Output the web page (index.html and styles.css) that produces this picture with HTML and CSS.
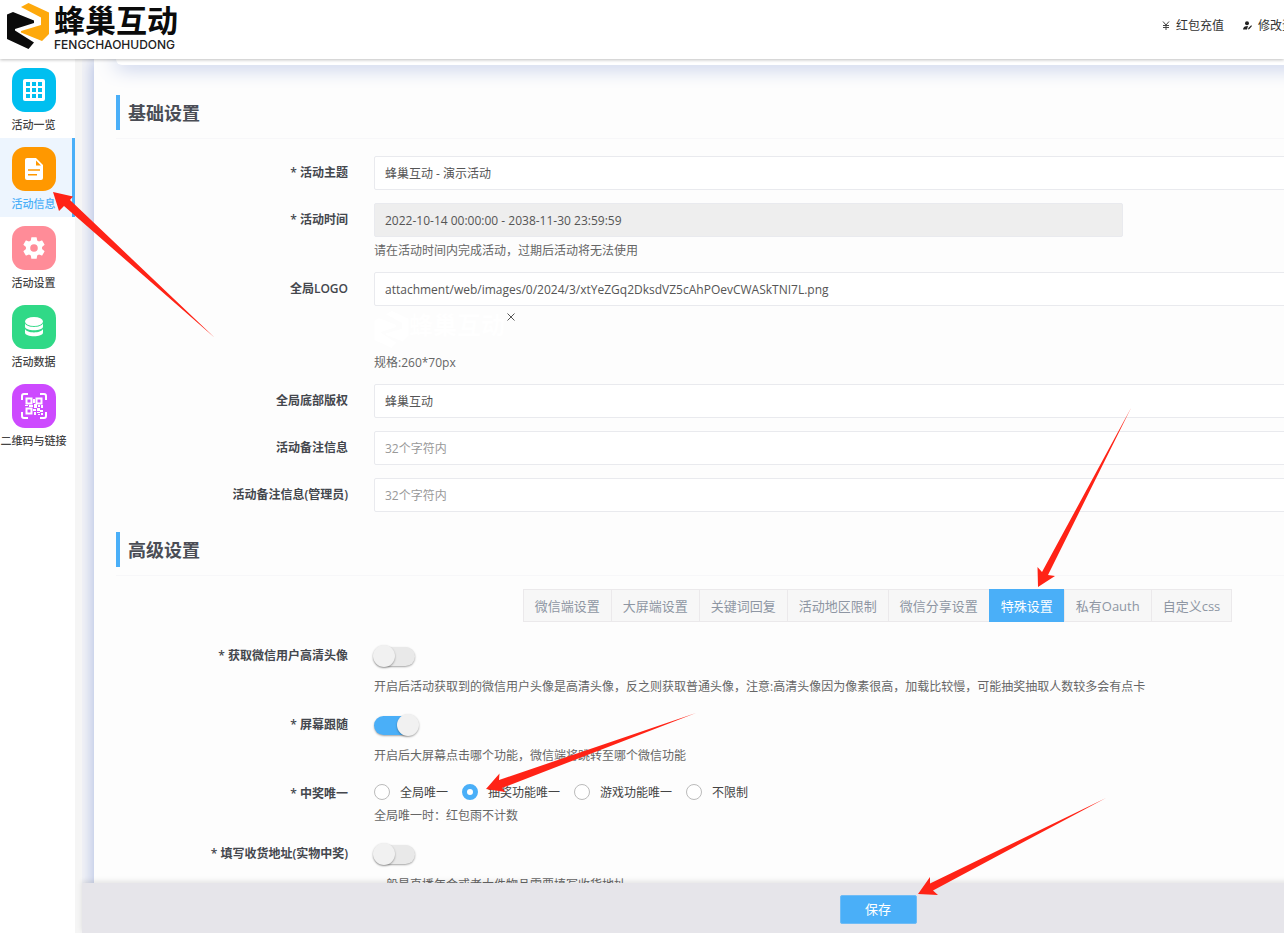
FILE: index.html
```
<!DOCTYPE html>
<html lang="zh-CN">
<head>
<meta charset="utf-8">
<title>蜂巢互动 - 活动信息</title>
<link rel="stylesheet" href="styles.css">
</head>
<body>
<header class="header">
  <a class="brand" href="#">
    <svg class="brand-mark" viewBox="0 0 42 46" aria-hidden="true">
      <path fill="#0b0b0b" d="M0 11.500L6 9L27 17.500V20L8 26V27.500L27 39.500L21.500 46L0 36z"/>
      <path fill="#fea90c" d="M14 4L21.500 0L42 9.500V31L35 38L14 29.500V28L34 22V14.500z"/>
    </svg>
    <span class="brand-text"><strong>蜂巢互动</strong><small>FENGCHAOHUDONG</small></span>
  </a>
  <nav class="top-nav">
    <a href="#">
      <svg width="8" height="9" viewBox="0 0 8 9" aria-hidden="true"><path d="M1 0.500L4 4L7 0.500M4 4V9M1 4.500H7M1 6.500H7" fill="none" stroke="#444" stroke-width="1"/></svg>
      红包充值</a>
    <a href="#">
      <svg width="9" height="9" viewBox="0 0 9 9" aria-hidden="true"><circle cx="4" cy="2.200" r="2" fill="#222"/><path d="M0 8.500C0 6 2 5 5 5L4 8.500zM5 8.500L5.400 7L8.200 4.200L9 5L6.400 7.900z" fill="#222"/></svg>
      修改资料</a>
  </nav>
</header>
<div class="body">
  <aside class="sidebar">
    <a class="side-item" href="#"><span class="tile cyan">
      <svg width="24" height="24" viewBox="0 0 24 24"><rect x="1" y="1" width="22" height="22" rx="2" fill="#fff"/><path d="M4 4h4v4H4zM10 4h4v4h-4zM16 4h4v4h-4zM4 10h4v4H4zM10 10h4v4h-4zM16 10h4v4h-4zM4 16h4v4H4zM10 16h4v4h-4zM16 16h4v4h-4z" fill="#00bff0"/></svg>
    </span>活动一览</a>
    <a class="side-item active" href="#"><span class="tile orange">
      <svg width="24" height="24" viewBox="0 0 24 24"><path d="M5 1h9l7 7v13a2 2 0 0 1-2 2H5a2 2 0 0 1-2-2V3a2 2 0 0 1 2-2z" fill="#fff"/><path d="M14 3.500V8.500h5zM6 12.200h12v1.600H6zM6 17h9v1.600H6z" fill="#ff9800"/></svg>
    </span>活动信息</a>
    <a class="side-item" href="#"><span class="tile pink">
      <svg width="26" height="26" viewBox="0 0 24 24"><path fill="#fff" d="M19.400 13a7.500 7.500 0 0 0 0-2l2.200-1.700a.5.5 0 0 0 .1-.6l-2-3.500a.5.5 0 0 0-.6-.2l-2.500 1a7.300 7.300 0 0 0-1.700-1l-.4-2.600a.5.5 0 0 0-.5-.4h-4a.5.5 0 0 0-.5.4L9.100 5a7.700 7.700 0 0 0-1.700 1l-2.500-1a.5.5 0 0 0-.6.200l-2 3.500a.5.5 0 0 0 .1.600L4.600 11a8 8 0 0 0 0 2l-2.200 1.700a.5.5 0 0 0-.1.600l2 3.500c.1.200.4.300.6.200l2.500-1a7.300 7.300 0 0 0 1.700 1l.4 2.600c0 .2.200.4.500.4h4c.2 0 .5-.2.500-.4l.4-2.600a7.700 7.700 0 0 0 1.700-1l2.500 1c.2.100.5 0 .6-.2l2-3.500a.5.5 0 0 0-.1-.6zM12 15.500a3.500 3.500 0 1 1 0-7 3.500 3.500 0 0 1 0 7z"/></svg>
    </span>活动设置</a>
    <a class="side-item" href="#"><span class="tile green">
      <svg width="20" height="22" viewBox="0 0 20 22"><ellipse cx="10" cy="5.500" rx="9" ry="4.500" fill="#fff"/><path fill="#fff" d="M1 7.500c2 4.500 16 4.500 18 0v3c0 5-18 5-18 0zM1 13c2 4.500 16 4.500 18 0v3.500c0 5-18 5-18 0z"/></svg>
    </span>活动数据</a>
    <a class="side-item" href="#"><span class="tile purple">
      <svg width="28" height="28" viewBox="0 0 28 28" fill="none" stroke="#fff" stroke-width="2"><path d="M2 8V4a2 2 0 0 1 2-2h4M20 2h4a2 2 0 0 1 2 2v4M26 20v4a2 2 0 0 1-2 2h-4M8 26H4a2 2 0 0 1-2-2v-4M6.500 6.500h5v5h-5zM16.500 6.500h5v5h-5zM6.500 16.500h5v5h-5z"/><path fill="#fff" stroke="none" d="M13 7h2v4h-2zM5 13h3v1H5zM9 13h4v2H9zM14 12h3v4h-3zM18 13h2v2h-2zM21 13h2v3h-2zM13 17h3v2h-3zM17 16h3v3h-3zM14 20h2v3h-2zM17 20h3v1h-3zM20 18h3v2h-3zM18 22h2v1h-2zM21 21h2v2h-2z"/></svg>
    </span>二维码与链接</a>
  </aside>
  <main class="main">
    <form class="stage">
      <div class="panel">
        <div class="prev-card"></div>
        <h2 class="section-title">基础设置</h2>
        <div class="row">
          <label class="row-label" for="topic">* 活动主题</label>
          <div class="field"><input class="text" id="topic" value="蜂巢互动 - 演示活动"></div>
        </div>
        <div class="row">
          <label class="row-label" for="time">* 活动时间</label>
          <div class="field"><input class="text locked" id="time" readonly value="2022-10-14 00:00:00 - 2038-11-30 23:59:59">
            <p class="help">请在活动时间内完成活动，过期后活动将无法使用</p></div>
        </div>
        <div class="row">
          <label class="row-label" for="logo">全局LOGO</label>
          <div class="field"><input class="text" id="logo" value="attachment/web/images/0/2024/3/xtYeZGq2DksdVZ5cAhPOevCWASkTNI7L.png">
            <div class="preview">
              <svg class="preview-mark" viewBox="0 0 42 46" aria-hidden="true">
                <path fill="#fff" d="M0 11.500L6 9L27 17.500V20L8 26V27.500L27 39.500L21.500 46L0 36zM14 4L21.500 0L42 9.500V31L35 38L14 29.500V28L34 22V14.500z"/>
              </svg>
              <span class="preview-name">蜂巢互动</span>
              <button class="remove" type="button" aria-label="删除"><svg width="8" height="8" viewBox="0 0 8 8"><path d="M0.500 0.500L7.500 7.500M7.500 0.500L0.500 7.500" stroke="#555" fill="none"/></svg></button>
            </div>
            <p class="help">规格:260*70px</p></div>
        </div>
        <div class="row">
          <label class="row-label" for="copy">全局底部版权</label>
          <div class="field"><input class="text" id="copy" value="蜂巢互动"></div>
        </div>
        <div class="row">
          <label class="row-label" for="note">活动备注信息</label>
          <div class="field"><input class="text" id="note" placeholder="32个字符内"></div>
        </div>
        <div class="row">
          <label class="row-label" for="admin-note">活动备注信息(管理员)</label>
          <div class="field"><input class="text" id="admin-note" placeholder="32个字符内"></div>
        </div>
        <h2 class="section-title advanced">高级设置</h2>
        <div class="tabs">
          <button type="button">微信端设置</button><button type="button">大屏端设置</button><button type="button">关键词回复</button><button type="button">活动地区限制</button><button type="button">微信分享设置</button><button type="button" class="on">特殊设置</button><button type="button">私有Oauth</button><button type="button">自定义css</button>
        </div>
        <div class="row">
          <label class="row-label" for="hd">* 获取微信用户高清头像</label>
          <div class="field"><div class="control"><input class="switch" type="checkbox" id="hd"></div>
            <p class="help">开启后活动获取到的微信用户头像是高清头像，反之则获取普通头像，注意:高清头像因为像素很高，加载比较慢，可能抽奖抽取人数较多会有点卡</p></div>
        </div>
        <div class="row">
          <label class="row-label" for="follow">* 屏幕跟随</label>
          <div class="field"><div class="control"><input class="switch" type="checkbox" id="follow" checked></div>
            <p class="help">开启后大屏幕点击哪个功能，微信端将跳转至哪个微信功能</p></div>
        </div>
        <div class="row">
          <span class="row-label">* 中奖唯一</span>
          <div class="field"><div class="radios">
              <label><input type="radio" name="only">全局唯一</label>
              <label><input type="radio" name="only" checked>抽奖功能唯一</label>
              <label><input type="radio" name="only">游戏功能唯一</label>
              <label><input type="radio" name="only">不限制</label>
            </div>
            <p class="help tight">全局唯一时：红包雨不计数</p></div>
        </div>
        <div class="row">
          <label class="row-label" for="addr">* 填写收货地址(实物中奖)</label>
          <div class="field"><div class="control"><input class="switch" type="checkbox" id="addr"></div>
            <p class="help">一般是直播年会或者大件物品需要填写收货地址</p></div>
        </div>
      </div>
    </form>
    <footer class="actions"><button class="save" type="button">保存</button></footer>
  </main>
</div>
<svg class="arrows" width="1284" height="933" viewBox="0 0 1284 933" aria-hidden="true">
  <path d="M53 192L73 196.500L70 200L215 338L64 206L59 211z"/>
  <path d="M1038 587L1037.500 567L1042 572L1131 408L1048 575L1055 576z"/>
  <path d="M486 789L499.500 773.500L499 780L696 713L502 788L505.500 792z"/>
  <path d="M918 894L930 877L930 883.500L1106 798L933 890.500L938 895z"/>
</svg>
</body>
</html>
```
FILE: styles.css
```
* { box-sizing: border-box; }

body {
  margin: 0;
  height: 100vh;
  display: flex;
  flex-direction: column;
  overflow: hidden;
  background: #f5f5f5;
  color: #444;
  font: 12px/17px "Open Sans", "Noto Sans CJK SC", sans-serif;
}

a { color: inherit; text-decoration: none; }
input, button { font: inherit; color: inherit; }

/* Header */
.header {
  position: relative;
  z-index: 2;
  flex: none;
  height: 59px;
  display: flex;
  align-items: flex-start;
  justify-content: space-between;
  background: #fff;
  box-shadow: 0 1px 3px rgba(0, 0, 0, 0.25);
}
.brand { display: flex; gap: 5px; padding: 3px 0 0 7px; }
.brand-mark { width: 42px; height: 46px; }
.brand-text { display: flex; flex-direction: column; color: #0b0b0b; }
.brand-text strong { font-size: 31px; line-height: 35px; font-weight: 700; }
.brand-text small { font: 500 12px/14px Inter, sans-serif; color: #222; }
.top-nav {
  flex: none;
  display: flex;
  gap: 19px;
  margin-right: -22px;
  padding-top: 17px;
  color: #333;
}
.top-nav a { display: flex; align-items: center; gap: 6px; white-space: nowrap; }

/* Sidebar */
.body { flex: 1; min-height: 0; display: flex; }
.sidebar { flex: none; width: 75px; background: #fff; }
.side-item {
  display: flex;
  flex-direction: column;
  align-items: center;
  padding: 9px 5px 0 0;
  border-right: 3px solid transparent;
  font-size: 11px;
  line-height: 26px;
  font-weight: 500;
  white-space: nowrap;
}
.side-item.active { background: #edf5fe; border-color: #4aaff8; color: #4aaff8; }
.tile {
  display: flex;
  align-items: center;
  justify-content: center;
  width: 44px;
  height: 44px;
  border-radius: 13px;
}
.cyan { background: #00bff0; }
.orange { background: #ff9800; }
.pink { background: #ff8c98; }
.green { background: #30d987; }
.purple { background: #cd4aff; }

/* Main */
.main { flex: 1; min-width: 1592px; margin-left: 7px; display: flex; flex-direction: column; }
.stage {
  flex: 1;
  min-height: 0;
  overflow: hidden;
  padding: 0 12px;
  background: #f5f5f7;
}
.panel {
  min-height: 100%;
  padding: 0 22px;
  background: #fdfdfd;
  box-shadow: 0 0 16px #a4b4e0;
}
.prev-card {
  height: 6px;
  border-radius: 0 0 10px 10px;
  background: #fff;
  box-shadow: 0 0 20px 1px #97a9da;
}
.section-title {
  position: relative;
  margin: 30px 0 26px;
  padding: 1px 0 0 8px;
  border-left: 4px solid #4aaff8;
  font-size: 18px;
  line-height: 34px;
  font-weight: 700;
  color: #4a4d55;
}
.section-title::after {
  content: "";
  position: absolute;
  left: -4px;
  right: 0;
  top: 43px;
  border-top: 1px solid #f7f7f9;
}
.section-title.advanced { margin: 20px 0 22px; }

.row { display: flex; gap: 26px; margin-bottom: 13px; }
.row-label {
  flex: none;
  width: 232px;
  text-align: right;
  line-height: 34px;
  font-weight: 600;
  color: #44474d;
}
.field { flex: 1; min-width: 0; color: #666; }
.text {
  display: block;
  width: 100%;
  height: 34px;
  padding: 1px 10px;
  border: 1px solid #e9eaee;
  border-radius: 2px;
  background: #fff;
  color: #555;
}
.text.locked { max-width: 749px; background: #eee; }
.text::placeholder { color: #999; }
.help { margin: 0; padding-top: 5px; color: #666; }
.help.tight { padding-top: 0; }
.preview { display: flex; height: 43px; padding-top: 5px; }
.preview-mark { width: 35px; height: 37px; }
.preview-name {
  width: 98px;
  font-size: 24px;
  line-height: 28px;
  font-weight: 700;
  color: #fff;
  white-space: nowrap;
}
.remove { height: 12px; padding: 0; border: 0; background: none; line-height: 0; }

/* Tabs */
.tabs { display: flex; justify-content: center; margin-bottom: 17px; }
.tabs button {
  height: 33px;
  margin-left: -1px;
  padding: 1px 11px 0;
  border: 1px solid #ebe9eb;
  background: #f7f7f7;
  color: #8e96a3;
  font-size: 13px;
  white-space: nowrap;
}
.tabs button.on { border-color: #4aaff8; background: #4aaff8; color: #fff; }

/* Switches and radios */
.control { display: flex; align-items: center; height: 34px; }
.switch {
  appearance: none;
  position: relative;
  width: 41px;
  height: 19px;
  margin: 0;
  border-radius: 10px;
  background: #e9e9e9;
  box-shadow: 0 1px 2px rgba(0, 0, 0, 0.35);
}
.switch::before {
  content: "";
  position: absolute;
  left: -1px;
  top: -2px;
  width: 22px;
  height: 22px;
  border-radius: 50%;
  background: #f1f1f1;
  box-shadow: 0 1px 2px rgba(0, 0, 0, 0.35);
}
.switch:checked { background: #4aaff8; }
.switch:checked::before { left: 23px; }
.radios { display: flex; align-items: center; gap: 14px; height: 30px; color: #444; }
.radios label { display: flex; align-items: center; gap: 10px; }
.radios input {
  appearance: none;
  width: 16px;
  height: 16px;
  margin: 0;
  border: 1px solid #bbb;
  border-radius: 50%;
  background: #fff;
}
.radios input:checked { border: 5px solid #4aaff8; }

/* Action bar */
.actions {
  position: relative;
  flex: none;
  display: flex;
  justify-content: center;
  padding: 12px 0 9px;
  background: #e6e5ea;
  box-shadow: 0 -2px 5px rgba(0, 0, 0, 0.1);
}
.save {
  width: 77px;
  height: 29px;
  padding: 0;
  border: 1px solid #6fbcf6;
  border-radius: 2px;
  background: #4aaff8;
  color: #fff;
  font-size: 13px;
}

.arrows { position: absolute; left: 0; top: 0; z-index: 5; pointer-events: none; fill: #ff2316; }
```
